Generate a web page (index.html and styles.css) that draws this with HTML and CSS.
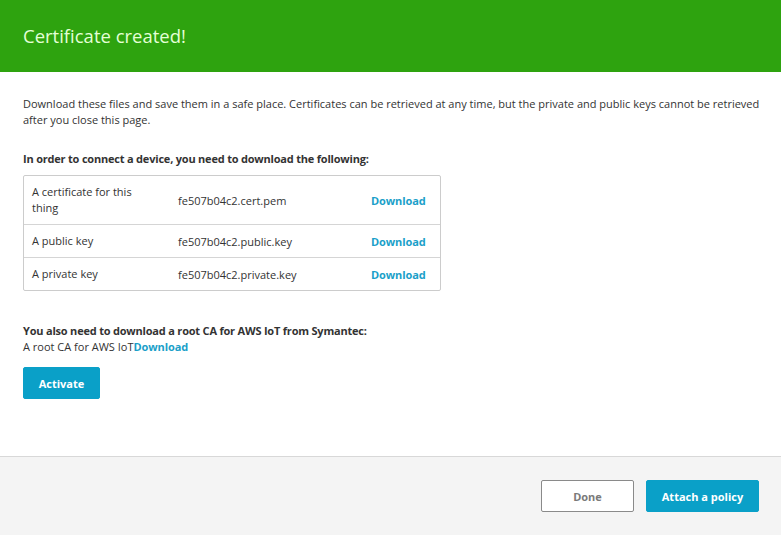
FILE: index.html
```html
<!DOCTYPE html>
<html>
<head>
<meta charset="utf-8">
<link rel="stylesheet" href="styles.css">
</head>
<body>
<div class="page">
  <header class="banner">
    <h1 class="banner-title">Certificate created!</h1>
  </header>
  <main class="content">
    <p class="intro">Download these files and save them in a safe place. Certificates can be retrieved at any time, but the private and public keys cannot be retrieved after you close this page.</p>
    <h2 class="section-title">In order to connect a device, you need to download the following:</h2>
    <div class="files">
      <div class="file-row tall">
        <div class="file-label">A certificate for this thing</div>
        <div class="file-name">fe507b04c2.cert.pem</div>
        <a class="link">Download</a>
      </div>
      <div class="file-row">
        <div class="file-label">A public key</div>
        <div class="file-name">fe507b04c2.public.key</div>
        <a class="link">Download</a>
      </div>
      <div class="file-row">
        <div class="file-label">A private key</div>
        <div class="file-name">fe507b04c2.private.key</div>
        <a class="link">Download</a>
      </div>
    </div>
    <h2 class="section-title root-title">You also need to download a root CA for AWS IoT from Symantec:</h2>
    <p class="root-line">A root CA for AWS IoT<a class="link">Download</a></p>
    <button class="btn btn-primary activate">Activate</button>
  </main>
  <footer class="footer">
    <button class="btn btn-secondary done">Done</button>
    <button class="btn btn-primary attach">Attach a policy</button>
  </footer>
</div>
</body>
</html>
```

FILE: styles.css
```css
html, body {
  margin: 0;
  padding: 0;
  background: #ffffff;
}
body {
  font-family: "Open Sans", "Noto Sans", sans-serif;
  color: #333333;
  font-size: 11px;
}
.page {
  width: 781px;
  height: 535px;
  display: flex;
  flex-direction: column;
}
.banner {
  background: #2ea30f;
  height: 72px;
  display: flex;
  align-items: center;
  padding: 0 23px;
  box-sizing: border-box;
}
.banner-title {
  margin: 0;
  font-size: 18.5px;
  font-weight: 400;
  color: #e4ffd6;
  padding-bottom: 1px;
}
.content {
  flex: 1;
  padding: 24px 23px 0 23px;
}
.intro {
  margin: 0;
  line-height: 16px;
  width: 745px;
}
.section-title {
  margin: 23px 0 0 0;
  font-size: 11px;
  font-weight: 700;
  line-height: 16px;
  color: #333333;
  letter-spacing: -0.2px;
}
.files {
  margin-top: 8px;
  width: 416px;
  border: 1px solid #cccccc;
  border-radius: 2px;
}
.file-row {
  display: grid;
  grid-template-columns: 146px 193px auto;
  align-items: center;
  height: 32px;
  padding-left: 8px;
  border-top: 1px solid #d5d5d5;
}
.file-row:first-child {
  border-top: none;
}
.file-row.tall {
  height: 48px;
}
.file-label {
  line-height: 16px;
  padding-right: 30px;
}
.link {
  color: #1b9fc9;
  font-weight: 700;
  text-decoration: none;
  letter-spacing: -0.1px;
}
.root-title {
  margin-top: 32px;
}
.root-line {
  margin: 0;
  line-height: 16px;
}
.btn {
  font-family: inherit;
  font-size: 11px;
  font-weight: 700;
  border-radius: 2px;
  height: 32px;
  cursor: pointer;
  box-sizing: border-box;
}
.btn-primary {
  background: #0aa0c8;
  color: #ffffff;
  border: 1px solid #0aa0c8;
}
.btn-secondary {
  background: #ffffff;
  color: #7a7a7a;
  border: 1px solid #8a8a8a;
}
.activate {
  margin-top: 12px;
  width: 77px;
}
.footer {
  box-sizing: border-box;
  height: 79px;
  flex: 0 0 79px;
  background: #f4f4f4;
  border-top: 1px solid #d8d8d8;
  display: flex;
  justify-content: flex-end;
  align-items: center;
  gap: 12px;
  padding-right: 22px;
}
.done {
  width: 93px;
}
.attach {
  width: 113px;
}
```
